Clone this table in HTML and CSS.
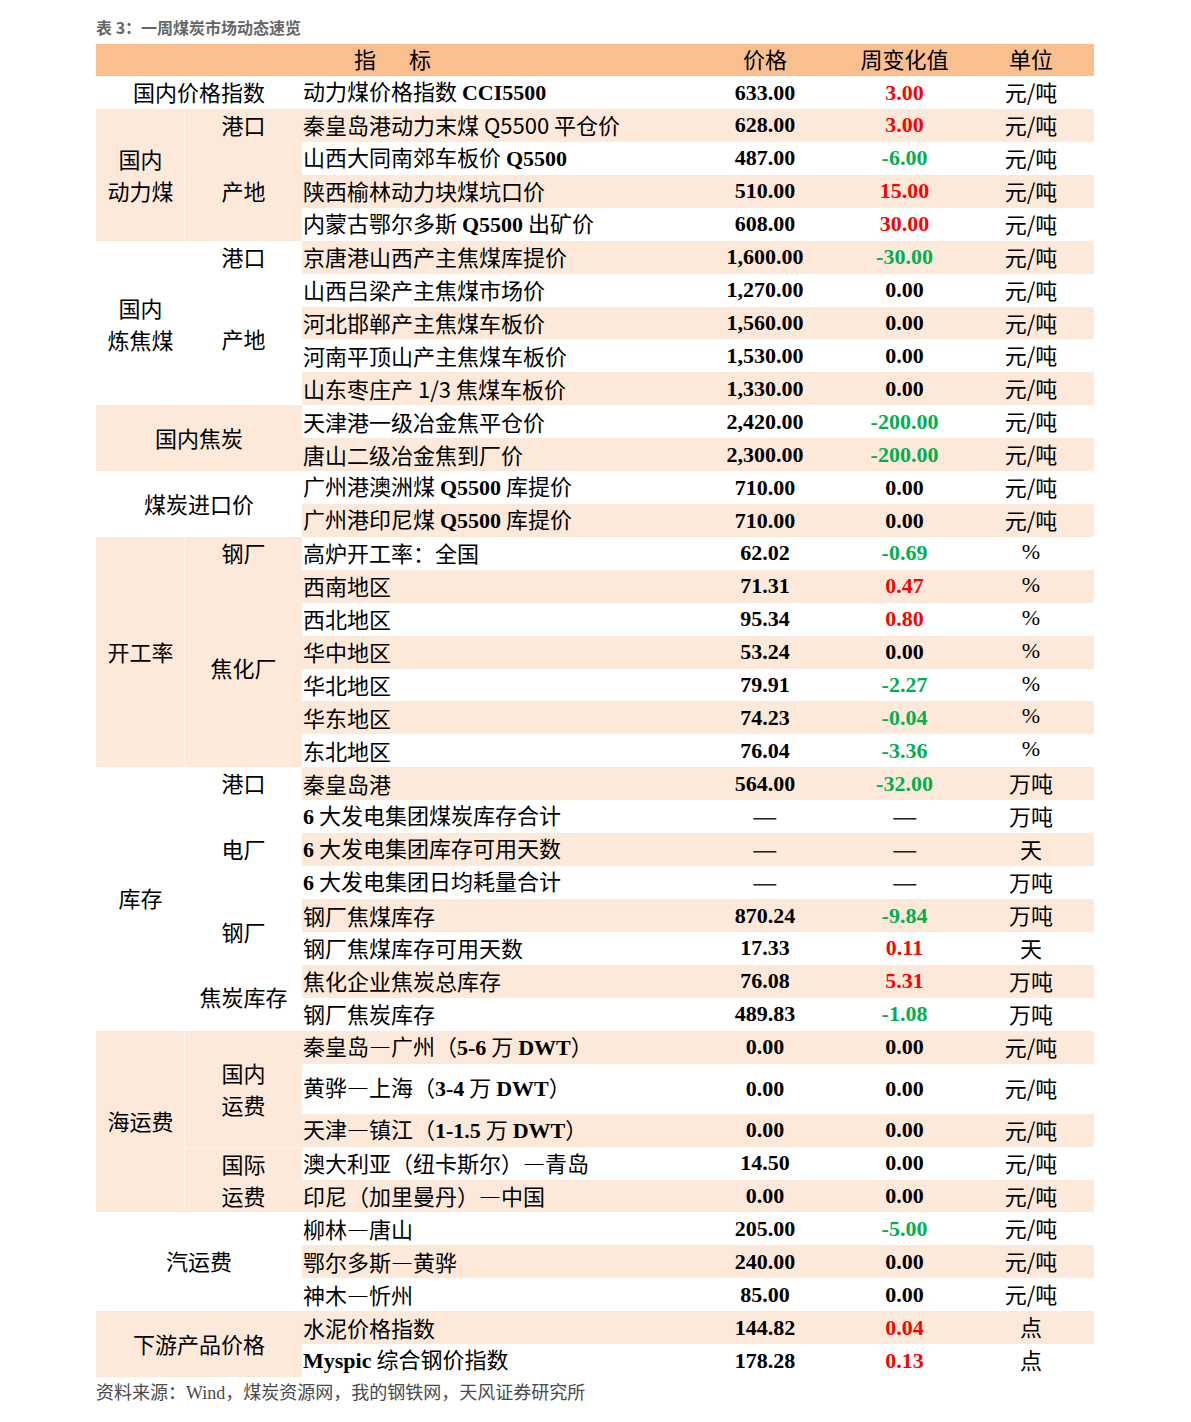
FILE: index.html
```html
<!DOCTYPE html>
<html lang="zh-CN">
<head>
<meta charset="utf-8">
<title>一周煤炭市场动态速览</title>
<link rel="stylesheet" href="styles.css">
</head>
<body>
<div class="page">
  <div class="title">表 3：一周煤炭市场动态速览</div>
  <table class="tbl">
    <colgroup>
      <col class="c1"><col class="c2"><col class="c3"><col class="c4"><col class="c5"><col class="c6">
    </colgroup>
    <thead>
      <tr>
        <th colspan="3"><span class="hz">指</span><span class="hgap"></span><span class="hz">标</span></th>
        <th>价格</th>
        <th>周变化值</th>
        <th>单位</th>
      </tr>
    </thead>
    <tbody>
      <tr>
        <td colspan="2" class="cat w">国内价格指数</td>
        <td class="ind">动力煤价格指数 <span class="b">CCI5500</span></td>
        <td class="num">633.00</td><td class="num red">3.00</td><td class="unit">元/吨</td>
      </tr>
      <tr class="s">
        <td rowspan="4" class="cat g two sep">国内<br>动力煤</td>
        <td class="cat g">港口</td>
        <td class="ind">秦皇岛港动力末煤 Q5500 平仓价</td>
        <td class="num">628.00</td><td class="num red">3.00</td><td class="unit">元/吨</td>
      </tr>
      <tr>
        <td rowspan="3" class="cat g">产地</td>
        <td class="ind">山西大同南郊车板价 <span class="b">Q5500</span></td>
        <td class="num">487.00</td><td class="num grn">-6.00</td><td class="unit">元/吨</td>
      </tr>
      <tr class="s">
        <td class="ind">陕西榆林动力块煤坑口价</td>
        <td class="num">510.00</td><td class="num red">15.00</td><td class="unit">元/吨</td>
      </tr>
      <tr>
        <td class="ind">内蒙古鄂尔多斯 <span class="b">Q5500</span> 出矿价</td>
        <td class="num">608.00</td><td class="num red">30.00</td><td class="unit">元/吨</td>
      </tr>
      <tr class="s">
        <td rowspan="5" class="cat w two">国内<br>炼焦煤</td>
        <td class="cat w">港口</td>
        <td class="ind">京唐港山西产主焦煤库提价</td>
        <td class="num">1,600.00</td><td class="num grn">-30.00</td><td class="unit">元/吨</td>
      </tr>
      <tr>
        <td rowspan="4" class="cat w">产地</td>
        <td class="ind">山西吕梁产主焦煤市场价</td>
        <td class="num">1,270.00</td><td class="num">0.00</td><td class="unit">元/吨</td>
      </tr>
      <tr class="s">
        <td class="ind">河北邯郸产主焦煤车板价</td>
        <td class="num">1,560.00</td><td class="num">0.00</td><td class="unit">元/吨</td>
      </tr>
      <tr>
        <td class="ind">河南平顶山产主焦煤车板价</td>
        <td class="num">1,530.00</td><td class="num">0.00</td><td class="unit">元/吨</td>
      </tr>
      <tr class="s">
        <td class="ind">山东枣庄产 1/3 焦煤车板价</td>
        <td class="num">1,330.00</td><td class="num">0.00</td><td class="unit">元/吨</td>
      </tr>
      <tr>
        <td colspan="2" rowspan="2" class="cat g">国内焦炭</td>
        <td class="ind">天津港一级冶金焦平仓价</td>
        <td class="num">2,420.00</td><td class="num grn">-200.00</td><td class="unit">元/吨</td>
      </tr>
      <tr class="s">
        <td class="ind">唐山二级冶金焦到厂价</td>
        <td class="num">2,300.00</td><td class="num grn">-200.00</td><td class="unit">元/吨</td>
      </tr>
      <tr>
        <td colspan="2" rowspan="2" class="cat w">煤炭进口价</td>
        <td class="ind">广州港澳洲煤 <span class="b">Q5500</span> 库提价</td>
        <td class="num">710.00</td><td class="num">0.00</td><td class="unit">元/吨</td>
      </tr>
      <tr class="s">
        <td class="ind">广州港印尼煤 <span class="b">Q5500</span> 库提价</td>
        <td class="num">710.00</td><td class="num">0.00</td><td class="unit">元/吨</td>
      </tr>
      <tr>
        <td rowspan="7" class="cat g sep">开工率</td>
        <td class="cat g">钢厂</td>
        <td class="ind">高炉开工率：全国</td>
        <td class="num">62.02</td><td class="num grn">-0.69</td><td class="unit pct">%</td>
      </tr>
      <tr class="s">
        <td rowspan="6" class="cat g">焦化厂</td>
        <td class="ind">西南地区</td>
        <td class="num">71.31</td><td class="num red">0.47</td><td class="unit pct">%</td>
      </tr>
      <tr>
        <td class="ind">西北地区</td>
        <td class="num">95.34</td><td class="num red">0.80</td><td class="unit pct">%</td>
      </tr>
      <tr class="s">
        <td class="ind">华中地区</td>
        <td class="num">53.24</td><td class="num">0.00</td><td class="unit pct">%</td>
      </tr>
      <tr>
        <td class="ind">华北地区</td>
        <td class="num">79.91</td><td class="num grn">-2.27</td><td class="unit pct">%</td>
      </tr>
      <tr class="s">
        <td class="ind">华东地区</td>
        <td class="num">74.23</td><td class="num grn">-0.04</td><td class="unit pct">%</td>
      </tr>
      <tr>
        <td class="ind">东北地区</td>
        <td class="num">76.04</td><td class="num grn">-3.36</td><td class="unit pct">%</td>
      </tr>
      <tr class="s">
        <td rowspan="8" class="cat w">库存</td>
        <td class="cat w">港口</td>
        <td class="ind">秦皇岛港</td>
        <td class="num">564.00</td><td class="num grn">-32.00</td><td class="unit">万吨</td>
      </tr>
      <tr>
        <td rowspan="3" class="cat w">电厂</td>
        <td class="ind"><span class="b">6</span> 大发电集团煤炭库存合计</td>
        <td class="dash"><span class="dl">—</span></td><td class="dash"><span class="dl">—</span></td><td class="unit">万吨</td>
      </tr>
      <tr class="s">
        <td class="ind"><span class="b">6</span> 大发电集团库存可用天数</td>
        <td class="dash"><span class="dl">—</span></td><td class="dash"><span class="dl">—</span></td><td class="unit">天</td>
      </tr>
      <tr>
        <td class="ind"><span class="b">6</span> 大发电集团日均耗量合计</td>
        <td class="dash"><span class="dl">—</span></td><td class="dash"><span class="dl">—</span></td><td class="unit">万吨</td>
      </tr>
      <tr class="s">
        <td rowspan="2" class="cat w">钢厂</td>
        <td class="ind">钢厂焦煤库存</td>
        <td class="num">870.24</td><td class="num grn">-9.84</td><td class="unit">万吨</td>
      </tr>
      <tr>
        <td class="ind">钢厂焦煤库存可用天数</td>
        <td class="num">17.33</td><td class="num red">0.11</td><td class="unit">天</td>
      </tr>
      <tr class="s">
        <td rowspan="2" class="cat w">焦炭库存</td>
        <td class="ind">焦化企业焦炭总库存</td>
        <td class="num">76.08</td><td class="num red">5.31</td><td class="unit">万吨</td>
      </tr>
      <tr>
        <td class="ind">钢厂焦炭库存</td>
        <td class="num">489.83</td><td class="num grn">-1.08</td><td class="unit">万吨</td>
      </tr>
      <tr class="s">
        <td rowspan="5" class="cat g sep">海运费</td>
        <td rowspan="3" class="cat g two">国内<br>运费</td>
        <td class="ind">秦皇岛—广州（<span class="b">5-6</span> 万 <span class="b">DWT</span>）</td>
        <td class="num">0.00</td><td class="num">0.00</td><td class="unit">元/吨</td>
      </tr>
      <tr class="tall">
        <td class="ind">黄骅—上海（<span class="b">3-4</span> 万 <span class="b">DWT</span>）</td>
        <td class="num">0.00</td><td class="num">0.00</td><td class="unit">元/吨</td>
      </tr>
      <tr class="s">
        <td class="ind">天津—镇江（<span class="b">1-1.5</span> 万 <span class="b">DWT</span>）</td>
        <td class="num">0.00</td><td class="num">0.00</td><td class="unit">元/吨</td>
      </tr>
      <tr>
        <td rowspan="2" class="cat g two topsep">国际<br>运费</td>
        <td class="ind">澳大利亚（纽卡斯尔）—青岛</td>
        <td class="num">14.50</td><td class="num">0.00</td><td class="unit">元/吨</td>
      </tr>
      <tr class="s">
        <td class="ind">印尼（加里曼丹）—中国</td>
        <td class="num">0.00</td><td class="num">0.00</td><td class="unit">元/吨</td>
      </tr>
      <tr>
        <td colspan="2" rowspan="3" class="cat w">汽运费</td>
        <td class="ind">柳林—唐山</td>
        <td class="num">205.00</td><td class="num grn">-5.00</td><td class="unit">元/吨</td>
      </tr>
      <tr class="s">
        <td class="ind">鄂尔多斯—黄骅</td>
        <td class="num">240.00</td><td class="num">0.00</td><td class="unit">元/吨</td>
      </tr>
      <tr>
        <td class="ind">神木—忻州</td>
        <td class="num">85.00</td><td class="num">0.00</td><td class="unit">元/吨</td>
      </tr>
      <tr class="s">
        <td colspan="2" rowspan="2" class="cat g">下游产品价格</td>
        <td class="ind">水泥价格指数</td>
        <td class="num">144.82</td><td class="num red">0.04</td><td class="unit">点</td>
      </tr>
      <tr>
        <td class="ind"><span class="b">Myspic</span> 综合钢价指数</td>
        <td class="num">178.28</td><td class="num red">0.13</td><td class="unit">点</td>
      </tr>
    </tbody>
  </table>
  <div class="source">资料来源：<span class="latin">Wind</span>，煤炭资源网，我的钢铁网，天风证券研究所</div>
</div>
</body>
</html>
```

FILE: styles.css
```css
html, body {
  margin: 0;
  padding: 0;
  background: #ffffff;
}

.page {
  padding: 15px 0 0 96px;
  width: 998px;
}

.title {
  font-family: "Noto Sans CJK SC", sans-serif;
  font-size: 16px;
  font-weight: 700;
  line-height: 24px;
  height: 24px;
  color: #666666;
  margin: 0 0 4.5px 0;
}

.tbl {
  border-collapse: collapse;
  border-spacing: 0;
  table-layout: fixed;
  width: 998px;
  font-family: "Noto Sans CJK SC", sans-serif;
  font-size: 22px;
  color: #000000;
}

.c1 { width: 89px; }
.c2 { width: 117px; }
.c3 { width: 387px; }
.c4 { width: 152px; }
.c5 { width: 127px; }
.c6 { width: 126px; }

.tbl th,
.tbl td {
  padding: 0 0 3px 0;
  vertical-align: middle;
  line-height: 28px;
  white-space: nowrap;
}

.tbl td.num {
  padding: 0;
}

.tbl thead tr {
  height: 32.5px;
  background: #fabf8f;
}

.tbl th {
  font-weight: 400;
  text-align: center;
}

.hgap {
  display: inline-block;
  width: 33px;
}

.tbl tbody tr {
  height: 32.9px;
}

.tbl tbody tr.tall {
  height: 50px;
}

.tbl tr.s {
  background: #fde9d9;
}

.tbl td.g { background: #fde9d9; }
.tbl td.w { background: #ffffff; }

.cat {
  text-align: center;
}

.tbl td.cat.two {
  line-height: 32px;
  padding: 0 0 1px 0;
}

.cat.sep {
  box-shadow: inset -1px 0 0 rgba(255, 255, 255, 0.4);
}

.cat.topsep {
  box-shadow: inset 0 1px 0 rgba(255, 255, 255, 0.4);
}

.tbl td.ind {
  text-align: left;
  padding-left: 1px;
  padding-bottom: 2px;
}

.b {
  font-family: "Liberation Serif", serif;
  font-weight: 700;
}

.num {
  font-family: "Liberation Serif", serif;
  font-weight: 700;
  text-align: center;
}

.red { color: #ff0000; }
.grn { color: #00b050; }

.dash {
  text-align: center;
  color: #222222;
}

.dl {
  display: inline-block;
  transform: scaleX(1.3);
}

.unit {
  text-align: center;
}

.unit.pct {
  font-family: "Liberation Serif", serif;
}

.source {
  font-family: "Noto Sans CJK SC", sans-serif;
  font-size: 18px;
  line-height: 24px;
  color: #4a4a4a;
  margin-top: 2px;
}

.source .latin {
  font-family: "Liberation Serif", serif;
}
```
